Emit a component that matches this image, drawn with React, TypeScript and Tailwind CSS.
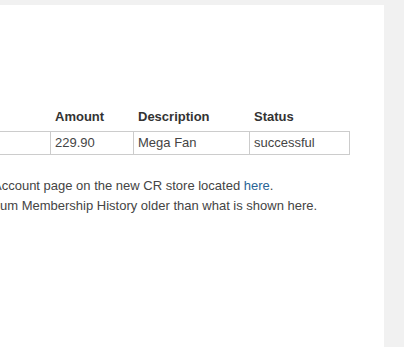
export default function App() {
  const font = { fontFamily: '"Liberation Sans", Arial, sans-serif' };
  return (
    <div className="w-[404px] h-[347px] bg-[#f1f1f1] pt-[5px] flex" style={font}>
      <div className="w-[384px] h-[342px] bg-white overflow-hidden">
        <div className="mt-[103px] ml-[-100px] grid grid-cols-[150px_83px_116px_101px] text-[13px] leading-[18px] text-[#333]">
          <div className="pb-[5px]" />
          <div className="pb-[5px] pl-[5px] font-bold text-[#333]">Amount</div>
          <div className="pb-[5px] pl-[5px] font-bold text-[#333]">Description</div>
          <div className="pb-[5px] pl-[5px] font-bold text-[#333]">Status</div>
          <div className="border-t border-b border-[#cccccc] py-[2px]" />
          <div className="border-t border-b border-l border-[#cccccc] py-[2px] pl-[4px] text-[#444]">229.90</div>
          <div className="border-t border-b border-l border-[#cccccc] py-[2px] pl-[4px] text-[#444]">Mega Fan</div>
          <div className="border-t border-b border-l border-r border-[#cccccc] py-[2px] pl-[4px] text-[#444]">successful</div>
        </div>
        <div className="mt-[21px] text-[13px] leading-[20px] text-[#444] whitespace-nowrap">
          <div className="ml-[-7px]">
            Account page on the new CR store located <a className="text-[#2a6496]">here</a>.
          </div>
          <div>um Membership History older than what is shown here.</div>
        </div>
      </div>
    </div>
  );
}
